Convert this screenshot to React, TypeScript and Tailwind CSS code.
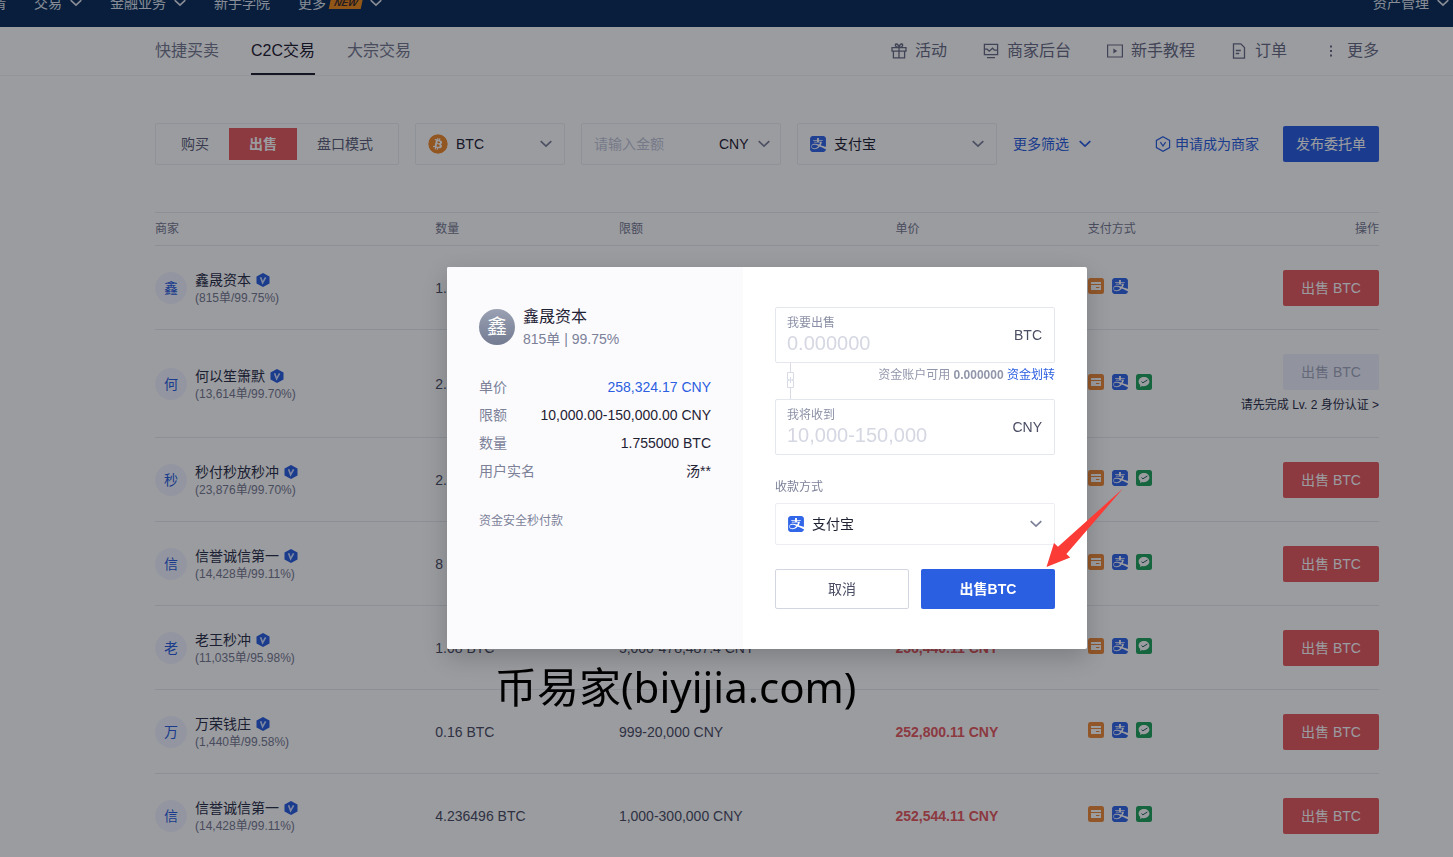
import type { ReactNode, SVGAttributes } from "react";
import { FaBitcoin } from "react-icons/fa";
import { SiAlipay } from "react-icons/si";

type SVGProps = SVGAttributes<SVGElement>;

interface Merchant {
  id: number;
  name: string;
  stats: string;
  amount: string;
  limit: string;
  price: string;
  wechat: boolean;
  locked?: boolean;
}

const merchants: Merchant[] = [
  { id: 1, name: "鑫晟资本", stats: "(815单/99.75%)", amount: "1.755000 BTC", limit: "10,000-150,000 CNY", price: "258,324.17 CNY", wechat: false },
  { id: 2, name: "何以笙箫默", stats: "(13,614单/99.70%)", amount: "2.5 BTC", limit: "10,000-200,000 CNY", price: "257,900.00 CNY", wechat: true, locked: true },
  { id: 3, name: "秒付秒放秒冲", stats: "(23,876单/99.70%)", amount: "2.1 BTC", limit: "5,000-200,000 CNY", price: "257,500.00 CNY", wechat: true },
  { id: 4, name: "信誉诚信第一", stats: "(14,428单/99.11%)", amount: "8 BTC", limit: "1,000-300,000 CNY", price: "256,800.00 CNY", wechat: true },
  { id: 5, name: "老王秒冲", stats: "(11,035单/95.98%)", amount: "1.08 BTC", limit: "5,000-478,487.4 CNY", price: "256,440.11 CNY", wechat: true },
  { id: 6, name: "万荣钱庄", stats: "(1,440单/99.58%)", amount: "0.16 BTC", limit: "999-20,000 CNY", price: "252,800.11 CNY", wechat: true },
  { id: 7, name: "信誉诚信第一", stats: "(14,428单/99.11%)", amount: "4.236496 BTC", limit: "1,000-300,000 CNY", price: "252,544.11 CNY", wechat: true },
];

export default function App() {
  return (
    <div className="relative h-screen overflow-hidden bg-white font-['Liberation_Sans','Noto_Sans_CJK_SC',sans-serif] text-sm text-[#1f2233]">
      <TopBar />
      <SubNav />
      <main className="pl-[155px] pr-[74px]">
        <Filters />
        <MerchantTable />
      </main>
      <SellDialog />
    </div>
  );
}

function TopBar() {
  return (
    <header className="flex h-[27px] items-end overflow-hidden bg-[#0c2e59] text-[#dfe5ee]">
      <nav className="flex h-12 w-full shrink-0 items-center whitespace-nowrap">
        <a href="#" className="-ml-[22px] mr-7">行情</a>
        <a href="#" className="mr-7 flex items-center gap-2">
          交易
          <ChevronIcon className="w-3" />
        </a>
        <a href="#" className="mr-7 flex items-center gap-2">
          金融业务
          <ChevronIcon className="w-3" />
        </a>
        <a href="#" className="mr-7">新手学院</a>
        <a href="#" className="flex items-center">
          更多
          <span className="ml-1 mr-2 flex h-3 w-8 -skew-x-12 items-center justify-center bg-[#f08a1c] text-[10px] font-bold italic text-[#3a2a2a]">
            NEW
          </span>
          <ChevronIcon className="w-3" />
        </a>
        <a href="#" className="ml-auto mr-1 flex items-center gap-2">
          资产管理
          <ChevronIcon className="w-3" />
        </a>
      </nav>
    </header>
  );
}

function SubNav() {
  return (
    <div className="flex justify-between border-b border-[#f1f2f6] pl-[155px] pr-[74px] text-base">
      <nav className="flex gap-8 text-[#767a90]">
        <a href="#" className="flex h-12 items-center">快捷买卖</a>
        <a href="#" className="flex h-12 items-center border-b-2 border-[#1f2030] pt-[2px] text-[#1f2030]">
          C2C交易
        </a>
        <a href="#" className="flex h-12 items-center">大宗交易</a>
      </nav>
      <nav className="flex gap-9 text-[#6a6d84]">
        <IconLink icon={<GiftIcon className="size-4" />}>活动</IconLink>
        <IconLink icon={<BoardIcon className="size-4" />}>商家后台</IconLink>
        <IconLink icon={<VideoIcon className="size-4" />}>新手教程</IconLink>
        <IconLink icon={<OrderIcon className="size-4" />}>订单</IconLink>
        <IconLink icon={<DotsIcon className="size-4" />}>更多</IconLink>
      </nav>
    </div>
  );
}

function IconLink({ icon, children }: { icon: ReactNode; children: ReactNode }) {
  return (
    <a href="#" className="flex h-12 items-center gap-2">
      {icon}
      {children}
    </a>
  );
}

function Filters() {
  return (
    <div className="flex items-center pb-[47px] pt-[47px]">
      <div className="flex rounded-xs border border-[#eceef3] px-[5px] py-1 text-[#5d6077]">
        <button className="h-8 w-[68px]">购买</button>
        <button className="h-8 w-[68px] bg-[#e65a5f] font-bold text-white">出售</button>
        <button className="h-8 w-24">盘口模式</button>
      </div>

      <div className="relative ml-4 h-[42px] w-[150px] rounded-xs border border-[#eceef3]">
        <FaBitcoin className="pointer-events-none absolute left-3 top-[10px] size-5 rounded-full bg-white text-[#f08a2c]" />
        <select aria-label="币种" className="size-full appearance-none pl-10">
          <option>BTC</option>
        </select>
        <ChevronIcon className="pointer-events-none absolute right-3 top-4 w-3 text-[#7c8198]" />
      </div>

      <div className="ml-4 flex h-[42px] w-[200px] items-center rounded-xs border border-[#eceef3] px-[10px]">
        <input
          aria-label="金额"
          placeholder="请输入金额"
          className="min-w-0 flex-1 pl-[2px] outline-none placeholder:text-[#c3c7d9]"
        />
        <div className="relative h-full w-[51px]">
          <select aria-label="法币" className="size-full appearance-none">
            <option>CNY</option>
          </select>
          <ChevronIcon className="pointer-events-none absolute right-0 top-4 w-3 text-[#7c8198]" />
        </div>
      </div>

      <div className="ml-4 h-[42px] w-[200px]">
        <PaySelect label="支付方式" />
      </div>

      <button className="ml-4 flex items-center gap-[10px] text-[#2b5ee0]">
        更多筛选
        <ChevronIcon className="w-3" />
      </button>
      <a href="#" className="ml-auto flex items-center gap-1 text-[#2b5ee0]">
        <HexagonIcon className="size-4" />
        申请成为商家
      </a>
      <button className="ml-6 h-9 w-24 rounded-xs bg-[#2b5fe2] text-white">发布委托单</button>
    </div>
  );
}

function PaySelect({ label }: { label: string }) {
  return (
    <div className="relative size-full rounded-xs border border-[#eceef3]">
      <SiAlipay className="pointer-events-none absolute left-3 top-3 size-4 rounded-xs bg-white text-[#3266e8]" />
      <select aria-label={label} className="size-full appearance-none pl-9">
        <option>支付宝</option>
      </select>
      <ChevronIcon className="pointer-events-none absolute right-3 top-4 w-3 text-[#7c8198]" />
    </div>
  );
}

function MerchantTable() {
  return (
    <table className="w-full table-fixed border-separate border-spacing-0 text-left">
      <colgroup>
        <col className="w-[22.9%]" />
        <col className="w-[15%]" />
        <col className="w-[22.6%]" />
        <col className="w-[15.7%]" />
        <col />
        <col className="w-[150px]" />
      </colgroup>
      <thead>
        <tr className="text-xs text-[#767a90]">
          <th className="h-[34px] border-y border-[#e8eaf0] font-normal">商家</th>
          <th className="border-y border-[#e8eaf0] font-normal">数量</th>
          <th className="border-y border-[#e8eaf0] font-normal">限额</th>
          <th className="border-y border-[#e8eaf0] font-normal">单价</th>
          <th className="border-y border-[#e8eaf0] font-normal">支付方式</th>
          <th className="border-y border-[#e8eaf0] text-right font-normal">操作</th>
        </tr>
      </thead>
      <tbody>
        {merchants.map((item) => (
          <MerchantRow key={item.id} item={item} />
        ))}
      </tbody>
    </table>
  );
}

function MerchantRow({ item }: { item: Merchant }) {
  return (
    <tr className={item.locked ? "h-[108px]" : "h-[84px]"}>
      <td className="border-b border-[#e8eaf0]">
        <div className="flex items-center gap-2">
          <span className="flex size-8 items-center justify-center rounded-full bg-[#f2f6ff] text-[#2b5ee0]">
            {item.name[0]}
          </span>
          <div className="pt-[2px]">
            <div className="flex items-center gap-[5px] leading-[18px] text-[#2b2f48]">
              {item.name}
              <BadgeIcon className="size-[14px]" />
            </div>
            <div className="text-xs leading-[18px] text-[#767a90]">{item.stats}</div>
          </div>
        </div>
      </td>
      <td className="border-b border-[#e8eaf0] text-[#4b4e64]">{item.amount}</td>
      <td className="border-b border-[#e8eaf0] text-[#4b4e64]">{item.limit}</td>
      <td className="border-b border-[#e8eaf0] font-bold text-[#e65a5f]">{item.price}</td>
      <td className="border-b border-[#e8eaf0]">
        <div className="flex gap-2 pb-1">
          <BankIcon className="size-4" />
          <SiAlipay className="size-4 rounded-xs bg-white text-[#3266e8]" />
          {item.wechat && <WechatPayIcon className="size-4" />}
        </div>
      </td>
      <td className="border-b border-[#e8eaf0]">
        <div className="flex flex-col items-end gap-[6px]">
          {item.locked ? (
            <>
              <button disabled className="h-9 w-24 rounded-xs bg-[#eef2fc] text-[#a3a8bd]">
                出售 BTC
              </button>
              <a href="#" className="whitespace-nowrap text-xs leading-[18px] text-[#2b2f48]">
                请先完成 Lv. 2 身份认证 &gt;
              </a>
            </>
          ) : (
            <button className="h-9 w-24 rounded-xs bg-[#e65a5f] text-white">出售 BTC</button>
          )}
        </div>
      </td>
    </tr>
  );
}

function SellDialog() {
  return (
    <div className="fixed inset-0 flex items-start justify-center bg-[#060812]/40 pl-[155px] pr-[74px] pt-[267px]">
      <div role="dialog" aria-label="出售BTC" className="relative flex w-[640px] rounded-xs bg-white shadow-[0_8px_24px_rgba(0,0,0,0.2)]">
        <section className="w-[296px] rounded-l-xs bg-[#fbfbfe] px-8 pt-[38px]">
          <div className="flex items-center gap-2">
            <span className="flex size-9 items-center justify-center rounded-full bg-linear-to-b from-[#9aa1b3] to-[#737b92] text-xl text-white">
              鑫
            </span>
            <div>
              <div className="text-base leading-6">鑫晟资本</div>
              <div className="leading-5 text-[#7c8198]">815单 | 99.75%</div>
            </div>
          </div>
          <dl className="mt-6 leading-7">
            <InfoRow label="单价">
              <span className="text-[#2b5ee0]">258,324.17 CNY</span>
            </InfoRow>
            <InfoRow label="限额">10,000.00-150,000.00 CNY</InfoRow>
            <InfoRow label="数量">1.755000 BTC</InfoRow>
            <InfoRow label="用户实名">汤**</InfoRow>
          </dl>
          <p className="mt-[26px] text-xs leading-5 text-[#7c8198]">资金安全秒付款</p>
        </section>

        <section className="flex-1 px-8 py-10">
          <AmountField id="sell" label="我要出售" placeholder="0.000000" unit="BTC" />
          <div className="flex h-9 justify-between pl-3">
            <LinkIcon className="h-9 w-2" />
            <p className="pt-[3px] text-xs leading-[18px] text-[#9196ab]">
              资金账户可用 <span className="font-bold">0.000000</span>{" "}
              <a href="#" className="text-[#2b5ee0]">资金划转</a>
            </p>
          </div>
          <AmountField id="receive" label="我将收到" placeholder="10,000-150,000" unit="CNY" />
          <div className="mt-[22px] text-xs leading-5 text-[#7c8198]">收款方式</div>
          <div className="mt-[6px] h-[42px]">
            <PaySelect label="收款方式" />
          </div>
          <div className="mt-6 grid grid-cols-2 gap-3">
            <button className="h-10 rounded-xs border border-[#d3d6e0] text-[#4b4e64]">取消</button>
            <button className="h-10 rounded-xs bg-[#2b5fe2] font-bold text-white">出售BTC</button>
          </div>
        </section>

        <svg className="absolute left-[597px] top-[219px] h-[84px] w-[84px]" viewBox="0 0 84 84" fill="#fb3b36">
          <path d="M2.5 81 10 57l4 3.800L79 2.500 22.400 68l3.800 3.400Z" />
        </svg>
        <p className="absolute left-12 top-full mt-2 whitespace-nowrap font-['Noto_Sans','Noto_Sans_CJK_SC',sans-serif] text-[42px] leading-[60px] text-black">
          币易家(biyijia.com)
        </p>
      </div>
    </div>
  );
}

function InfoRow({ label, children }: { label: string; children: ReactNode }) {
  return (
    <div className="flex justify-between">
      <dt className="text-[#7c8198]">{label}</dt>
      <dd>{children}</dd>
    </div>
  );
}

function AmountField({ id, label, placeholder, unit }: { id: string; label: string; placeholder: string; unit: string }) {
  return (
    <div className="flex h-14 items-center rounded-xs border border-[#e4e7ee] pl-[11px] pr-3">
      <div className="min-w-0 flex-1">
        <label htmlFor={id} className="block text-xs leading-[18px] text-[#8b90a6]">{label}</label>
        <input
          id={id}
          placeholder={placeholder}
          className="block h-6 w-full pb-[2px] text-xl outline-none placeholder:text-[#d5d7e2]"
        />
      </div>
      <span className="text-[#4b4e64]">{unit}</span>
    </div>
  );
}

const ChevronIcon = (props: SVGProps) => (
  <svg {...props} viewBox="0 0 12 8" fill="none" stroke="currentColor" strokeWidth="1.7">
    <path d="m.7 1.2 5.3 5 5.3-5" />
  </svg>
);

const GiftIcon = (props: SVGProps) => (
  <svg {...props} viewBox="0 0 16 16" fill="none" stroke="currentColor" strokeWidth="1.3">
    <path d="M1 4.6h14v3.600H1zM2.400 8.200v6.600h11.200V8.200M8 4.600v10.200M8 4.400C4.200 4.600 3.400 1.200 5.200 1 6.800.8 7.600 2.600 8 4.400 8.400 2.600 9.200.8 10.800 1c1.800.2 1 3.600-2.800 3.400Z" />
  </svg>
);

const BoardIcon = (props: SVGProps) => (
  <svg {...props} viewBox="0 0 16 16" fill="none" stroke="currentColor" strokeWidth="1.3">
    <path d="M1.400 1.400h13.200v10.200H1.400zM4 14.600h8M1.400 6.200h2.800l2 2 3.400-3 1.800 2h3.200" />
  </svg>
);

const VideoIcon = (props: SVGProps) => (
  <svg {...props} viewBox="0 0 16 16" fill="none" stroke="currentColor" strokeWidth="1.2">
    <path d="M.6 2h14.800v12H.6z" />
    <path d="m6.400 5.600 3.800 2.400-3.800 2.400z" fill="currentColor" stroke="none" />
  </svg>
);

const OrderIcon = (props: SVGProps) => (
  <svg {...props} viewBox="0 0 16 16" fill="none" stroke="currentColor" strokeWidth="1.3">
    <path d="M2.500.8h7.300l3.700 3.700v10.700h-11zM4.800 7.500h5M4.800 10.500h3.400" />
  </svg>
);

const DotsIcon = (props: SVGProps) => (
  <svg {...props} viewBox="0 0 16 16" fill="currentColor">
    <path d="M7 2.500h2v2H7zM7 7h2v2H7zM7 11.500h2v2H7z" />
  </svg>
);

const HexagonIcon = (props: SVGProps) => (
  <svg {...props} viewBox="0 0 16 16" fill="none" stroke="currentColor" strokeWidth="1.2">
    <path d="m8 .8 6.600 3.600v7.200L8 15.200l-6.600-3.600V4.400z" />
    <path d="M5.400 6.200 8 10l2.600-3.800" />
  </svg>
);

const BadgeIcon = (props: SVGProps) => (
  <svg {...props} viewBox="0 0 14 14" fill="none">
    <path d="m7 0 6.500 3.500v7L7 14 .5 10.500v-7z" fill="#2b5ee0" />
    <path d="M4.600 4.300 6.600 9.800 9.600 4.300" stroke="#cfe0ff" strokeWidth="1.600" />
  </svg>
);

const BankIcon = (props: SVGProps) => (
  <svg {...props} viewBox="0 0 16 16">
    <rect width="16" height="16" rx="2.500" fill="#f08c3a" />
    <path d="M3 4h10v2H3zM3 7h10v5H3z" fill="#fff" />
    <path d="M8 9h3.500v1H8z" fill="#f08c3a" />
  </svg>
);

const WechatPayIcon = (props: SVGProps) => (
  <svg {...props} viewBox="0 0 16 16">
    <rect width="16" height="16" rx="2.500" fill="#20a35c" />
    <path d="M8 3c3 0 5.400 2 5.400 4.600S11 12.200 8 12.200c-.7 0-1.300-.1-1.900-.3L4 13l.3-1.900C3.200 10.300 2.600 9 2.600 7.600 2.600 5 5 3 8 3Z" fill="#fff" />
    <path d="m5.500 7.600 1.400 1.200L11.400 6" stroke="#20605c" strokeWidth="1" fill="none" />
  </svg>
);

const LinkIcon = (props: SVGProps) => (
  <svg {...props} viewBox="0 0 8 36" fill="none" stroke="#d8dae5">
    <path d="M3.500 0v9M3.500 25v11M3.500 14v6" />
    <path d="M2.500 16.500h-2v-7h6v7h-2M2.500 17.500h-2v7h6v-7h-2" />
  </svg>
);
